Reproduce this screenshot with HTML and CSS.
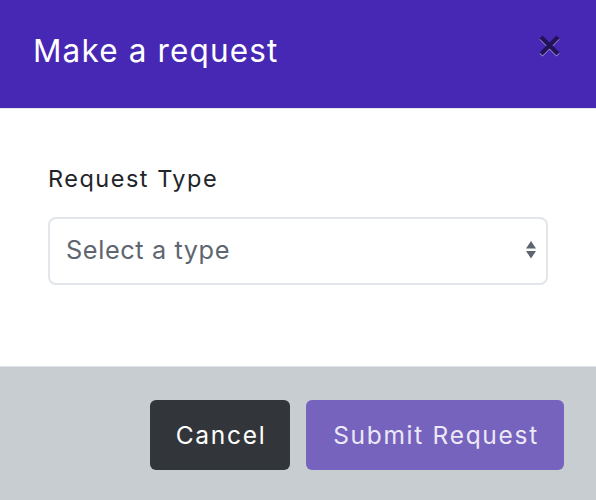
FILE: index.html
```html
<!DOCTYPE html>
<html>
<head>
<meta charset="utf-8">
<link rel="stylesheet" href="styles.css">
</head>
<body>
<div class="modal">
  <header class="modal-header">
    <h1 class="modal-title">Make a request</h1>
    <button class="close" aria-label="Close">
      <svg width="22" height="22" viewBox="0 0 22 22">
        <g opacity="0.5">
          <path d="M2 3 L19 20 M19 3 L2 20" stroke="#ffffff" stroke-width="4.4"/>
          <path d="M2 2 L19 19 M19 2 L2 19" stroke="#000000" stroke-width="4.4"/>
        </g>
      </svg>
    </button>
  </header>
  <section class="modal-body">
    <label class="field-label">Request Type</label>
    <div class="select">
      <span class="select-text">Select a type</span>
      <svg class="select-arrows" width="10" height="18" viewBox="0 0 10 18">
        <path d="M5 0 L10 7.5 L0 7.5 Z" fill="#5d6670"/>
        <path d="M0 10 L10 10 L5 17.5 Z" fill="#5d6670"/>
      </svg>
    </div>
  </section>
  <footer class="modal-footer">
    <button class="btn btn-dark">Cancel</button>
    <button class="btn btn-primary">Submit Request</button>
  </footer>
</div>
</body>
</html>
```
FILE: styles.css
```css
html, body {
  margin: 0;
  padding: 0;
}
body {
  font-family: "Inter", "Open Sans", sans-serif;
  background: #c8cdd1;
}
.modal {
  display: flex;
  flex-direction: column;
  height: 500px;
}
.modal-header {
  background: #4628b4;
  height: 102px;
  display: flex;
  align-items: center;
  justify-content: space-between;
  padding: 0 35px 6px 33px;
  border-bottom: 1px solid #e6e8ec;
}
.modal-title {
  margin: 0;
  color: #ffffff;
  font-weight: 400;
  font-size: 31.5px;
  line-height: 1;
  letter-spacing: 1.15px;
}
.close {
  background: none;
  border: 0;
  padding: 0;
  width: 22px;
  height: 22px;
  display: flex;
  margin-bottom: 10px;
}
.modal-body {
  background: #ffffff;
  height: 199px;
  padding: 58px 48px 0 48px;
  border-bottom: 1px solid #dfe3e7;
}
.field-label {
  display: block;
  font-size: 23.5px;
  line-height: 23px;
  color: #212529;
  letter-spacing: 1.5px;
  margin-bottom: 27px;
}
.select {
  height: 68px;
  box-sizing: border-box;
  border: 2px solid #e2e5e9;
  border-radius: 8px;
  display: flex;
  align-items: center;
  justify-content: space-between;
  padding: 0 10px 3px 16px;
}
.select-text {
  font-size: 25.3px;
  line-height: 1;
  color: #5d6670;
  letter-spacing: 0.6px;
}
.modal-footer {
  flex: 1;
  display: flex;
  justify-content: flex-end;
  align-items: flex-start;
  gap: 16px;
  padding: 33px 32px 0 0;
}
.btn {
  height: 70px;
  border: 0;
  border-radius: 6px;
  font-family: inherit;
  font-size: 24.5px;
  letter-spacing: 1.7px;
  padding: 0 0 0 2px;
}
.btn-dark {
  background: #32363a;
  color: #ffffff;
  width: 140px;
}
.btn-primary {
  background: #7663bd;
  color: #ece9f7;
  width: 258px;
}
```
